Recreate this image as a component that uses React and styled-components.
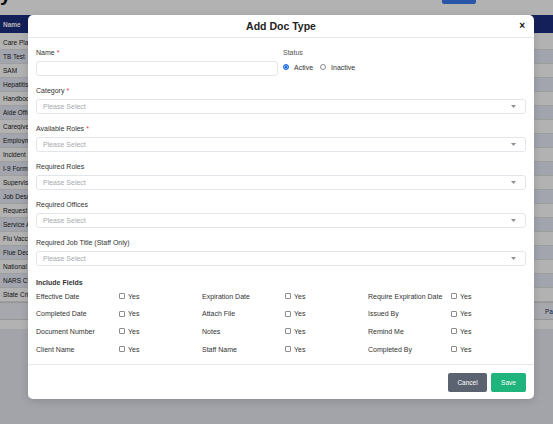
import styled, { createGlobalStyle } from "styled-components";

const GlobalStyle = createGlobalStyle`
  html, body { margin: 0; padding: 0; }
  body {
    font-family: "Liberation Sans", Arial, Helvetica, sans-serif;
    color: #333;
    -webkit-font-smoothing: antialiased;
  }
  * { box-sizing: border-box; }
`;

// ── Page behind the modal ─────────────────────────────────────────────────────
const Page = styled.div`
  position: relative;
  width: 553px;
  height: 424px;
  overflow: hidden;
  background: #e9ebf4;
`;

const TopBar = styled.div`
  height: 15px;
  background: #fff;
  display: flex;
  align-items: flex-end;
  justify-content: space-between;
  overflow: hidden;
  padding-right: 77px;
`;

const PageTitle = styled.h1`
  margin: -16px 0 0 0;
  font-size: 20px;
  font-weight: 700;
  line-height: 20px;
  color: #111;
  align-self: flex-start;
`;

const TopButton = styled.button`
  align-self: flex-start;
  margin-top: -16px;
  width: 34px;
  height: 20px;
  border: 0;
  border-radius: 2px;
  background: #3c7cf0;
`;

const Table = styled.div`
  display: flex;
  flex-direction: column;
`;

const HeadRow = styled.div`
  height: 18px;
  background: #1d2f82;
  color: #fff;
  font-size: 6.5px;
  font-weight: 700;
  display: flex;
  align-items: center;
`;

const Row = styled.div`
  height: ${({ $first }) => ($first ? "17px" : "14px")};
  padding-top: ${({ $first }) => ($first ? "3px" : "0")};
  background: ${({ $alt }) => ($alt ? "#e8edf9" : "#ffffff")};
  border-bottom: 1px solid #e3e3e3;
  font-size: 6.5px;
  color: #222;
  display: flex;
  align-items: center;
`;

// Name column: the modal covers everything past its first few letters
const Cell = styled.span`
  width: 28px;
  padding-left: 3px;
  overflow: hidden;
  white-space: nowrap;
`;

const Pager = styled.div`
  height: 18px;
  background: #eef1f9;
  border-top: 1px solid #d6d6d6;
  border-bottom: 1px solid #d6d6d6;
  display: flex;
  align-items: center;
  justify-content: flex-end;
  font-size: 6.5px;
  color: #1d2f62;
  white-space: nowrap;
  overflow: hidden;
`;

const PagerText = styled.span`
  width: 8px;
  overflow: hidden;
`;

const Band = styled.div`
  height: 9px;
  background: #ffffff;
`;

const Backdrop = styled.div`
  position: absolute;
  inset: 0;
  background: rgba(0, 0, 0, 0.3);
`;

// ── Modal ────────────────────────────────────────────────────────────────────
const Modal = styled.div`
  position: absolute;
  left: 28px;
  top: 15px;
  width: 506px;
  background: #fff;
  border-radius: 5px;
  box-shadow: 0 2px 8px rgba(0, 0, 0, 0.15);
  overflow: hidden;
`;

const ModalHead = styled.header`
  height: 23px;
  border-bottom: 1px solid #e6e8eb;
  display: grid;
  grid-template-columns: 1fr auto 1fr;
  align-items: center;
  padding: 0 8px;
`;

const ModalTitle = styled.h2`
  grid-column: 2;
  margin: 0;
  font-size: 10.5px;
  font-weight: 700;
  color: #222;
`;

const Close = styled.button`
  justify-self: end;
  border: 0;
  background: none;
  padding: 0;
  font-family: inherit;
  font-size: 10px;
  font-weight: 700;
  line-height: 1;
  color: #111;
  margin-right: 1px;
`;

const ModalBody = styled.div`
  padding: 10px 8px 10px;
`;

const TopRow = styled.div`
  display: grid;
  grid-template-columns: 242px 1fr;
  gap: 5px;
  margin-bottom: 10px;
`;

const Group = styled.div`
  margin-bottom: ${({ $last }) => ($last ? "0" : "10px")};
`;

const Label = styled.div`
  font-size: 7px;
  line-height: 9px;
  height: 9px;
  color: ${({ $muted }) => ($muted ? "#555" : "#333")};
  font-weight: ${({ $bold }) => ($bold ? 700 : 400)};
  margin-bottom: 4px;
  white-space: nowrap;
`;

const Req = styled.span`
  color: #e0383e;
  margin-left: 2px;
`;

const TextInput = styled.div`
  height: 15px;
  border: 1px solid #e2e5e9;
  border-radius: 3px;
  background: #fff;
`;

const Select = styled.div`
  height: 15px;
  border: 1px solid #e2e5e9;
  border-radius: 3px;
  background: #fff;
  display: flex;
  align-items: center;
  justify-content: space-between;
  padding: 0 9px 0 6px;
  font-size: 7px;
  color: #a6a9ae;
`;

const Radios = styled.div`
  display: flex;
  align-items: center;
  height: 10px;
  margin-top: 5px;
  font-size: 7px;
  color: #333;
`;

const RadioItem = styled.label`
  display: flex;
  align-items: center;
  gap: 5px;
  margin-right: 7px;
`;

const RadioDot = styled.span`
  width: 6px;
  height: 6px;
  border-radius: 50%;
  border: 1px solid ${({ $on }) => ($on ? "#1f6fe5" : "#8a8a8a")};
  background: ${({ $on }) => ($on ? "#1f6fe5" : "#fff")};
  box-shadow: ${({ $on }) => ($on ? "inset 0 0 0 0.6px #cfe0fb" : "none")};
`;

const FieldsTitle = styled(Label)`
  margin-top: 12px;
  margin-bottom: 4px;
`;

const FieldsGrid = styled.div`
  display: grid;
  grid-template-columns: repeat(5, 83px) 1fr;
  grid-auto-rows: 10px;
  row-gap: 7.7px;
  align-items: center;
  font-size: 7px;
  color: #333;
`;

const FieldName = styled.span`
  white-space: nowrap;
`;

const Check = styled.label`
  display: flex;
  align-items: center;
  gap: 3px;
`;

const Box = styled.span`
  width: 6px;
  height: 6px;
  border: 1px solid #8d8d8d;
  border-radius: 1px;
  background: #fff;
`;

const ModalFoot = styled.footer`
  border-top: 1px solid #e6e8eb;
  padding: 8px 8px 7px;
  display: flex;
  justify-content: flex-end;
  gap: 4px;
`;

const Button = styled.button`
  height: 19px;
  width: ${({ $w }) => $w}px;
  border: 0;
  border-radius: 2px;
  background: ${({ $kind }) => ($kind === "save" ? "#1fb47c" : "#5b6270")};
  color: #fff;
  font-family: inherit;
  font-size: 6.5px;
  padding: 0;
`;

const Chevron = () => (
  <svg width="5" height="3" viewBox="0 0 5 3">
    <path d="M0 0 L5 0 L2.5 3 Z" fill="#8c8f94" />
  </svg>
);

const ROWS = [
  "Care Plan", "TB Test", "SAM", "Hepatitis B", "Handbook", "Aide Office",
  "Caregiver", "Employment", "Incident", "I-9 Form", "Supervision",
  "Job Description", "Request", "Service Agreement", "Flu Vaccine",
  "Flue Declination", "National", "NARS Check", "State Criminal",
];

const SELECTS = [
  { label: "Category", req: true },
  { label: "Available Roles", req: true },
  { label: "Required Roles" },
  { label: "Required Offices" },
  { label: "Required Job Title (Staff Only)" },
];

const FIELDS = [
  ["Effective Date", "Expiration Date", "Require Expiration Date"],
  ["Completed Date", "Attach File", "Issued By"],
  ["Document Number", "Notes", "Remind Me"],
  ["Client Name", "Staff Name", "Completed By"],
];

export default function App() {
  return (
    <>
      <GlobalStyle />
      <Page>
        <TopBar>
          <PageTitle>y</PageTitle>
          <TopButton />
        </TopBar>
        <Table>
          <HeadRow>
            <Cell>Name</Cell>
          </HeadRow>
          {ROWS.map((r, i) => (
            <Row key={r} $first={i === 0} $alt={i % 2 === 1}>
              <Cell>{r}</Cell>
            </Row>
          ))}
          <Pager>
            <PagerText>Page</PagerText>
          </Pager>
          <Band />
        </Table>
        <Backdrop />

        <Modal>
          <ModalHead>
            <ModalTitle>Add Doc Type</ModalTitle>
            <Close aria-label="Close">×</Close>
          </ModalHead>

          <ModalBody>
            <TopRow>
              <div>
                <Label>
                  Name<Req>*</Req>
                </Label>
                <TextInput />
              </div>
              <div>
                <Label $muted>Status</Label>
                <Radios>
                  <RadioItem>
                    <RadioDot $on />
                    Active
                  </RadioItem>
                  <RadioItem>
                    <RadioDot />
                    Inactive
                  </RadioItem>
                </Radios>
              </div>
            </TopRow>

            {SELECTS.map((s, i) => (
              <Group key={s.label} $last={i === SELECTS.length - 1}>
                <Label>
                  {s.label}
                  {s.req && <Req>*</Req>}
                </Label>
                <Select>
                  Please Select
                  <Chevron />
                </Select>
              </Group>
            ))}

            <FieldsTitle $bold>Include Fields</FieldsTitle>
            <FieldsGrid>
              {FIELDS.flatMap((row) =>
                row.flatMap((name) => [
                  <FieldName key={name}>{name}</FieldName>,
                  <Check key={name + "-yes"}>
                    <Box />
                    Yes
                  </Check>,
                ])
              )}
            </FieldsGrid>
          </ModalBody>

          <ModalFoot>
            <Button $w={39}>Cancel</Button>
            <Button $w={35} $kind="save">
              Save
            </Button>
          </ModalFoot>
        </Modal>
      </Page>
    </>
  );
}
